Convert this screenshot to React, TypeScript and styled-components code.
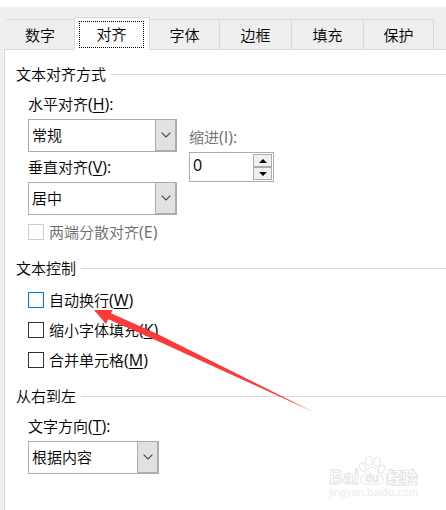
import React from 'react';
import styled, { createGlobalStyle } from 'styled-components';

const GlobalStyle = createGlobalStyle`
  *, *::before, *::after { box-sizing: border-box; }
  body {
    margin: 0;
    background: #fff;
    color: #000;
    font: 15px/20px "Open Sans", "Noto Sans CJK SC", sans-serif;
  }
`;

const Dialog = styled.main`
  position: relative;
  width: 446px;
  height: 510px;
  margin: 0;
  padding-top: 7px;
  overflow: hidden;
  white-space: nowrap;
  font-family: "Open Sans", "Noto Sans CJK SC", sans-serif;
  font-weight: 350;
`;

const Body = styled.div`
  display: flex;
  flex-direction: column;
  height: 503px;
  background: #efefef;
  padding-left: 4px;
`;

const TabBar = styled.div`
  display: flex;
  align-items: flex-end;
  height: 43px;
  padding-left: 2px;
  margin-bottom: -1px;
  z-index: 1;
`;

const Tab = styled.button<{ $width: number; $active?: boolean; $beforeActive?: boolean }>`
  display: flex;
  width: ${p => p.$width}px;
  height: ${p => (p.$active ? 33 : 31)}px;
  padding: ${p => (p.$active ? '3px 5px 2px 4px' : '0')};
  border: solid #d9d9d9;
  border-width: 1px ${p => (p.$beforeActive ? 0 : 1)}px ${p => (p.$active ? 0 : 1)}px ${p => (p.$active ? 1 : 0)}px;
  background: ${p => (p.$active ? '#fff' : '#efefef')};
  font: inherit;
  color: inherit;
`;

const TabLabel = styled.span<{ $focused?: boolean }>`
  display: flex;
  flex: 1;
  align-items: center;
  justify-content: center;
  height: ${p => (p.$focused ? 27 : 30)}px;
  padding-bottom: ${p => (p.$focused ? 1 : 0)}px;
  border: ${p => (p.$focused ? '1px dotted #000' : '0')};
`;

const Panel = styled.section`
  flex: 1;
  padding: 14px 0 0 11px;
  border: solid #d9d9d9;
  border-width: 1px 0 0 1px;
  background: #fff;
`;

const Group = styled.section<{ $height: number }>`
  height: ${p => p.$height}px;
`;

const Heading = styled.h2`
  display: flex;
  align-items: center;
  gap: 5px;
  height: 20px;
  margin: 0;
  font-size: 15px;
  font-weight: inherit;
  &::after {
    content: "";
    flex: 1;
    height: 1px;
    background: #d9d9d9;
  }
`;

const Fields = styled.div<{ $top: number }>`
  display: flex;
  gap: 12px;
  padding: ${p => p.$top}px 0 0 12px;
`;

const Column = styled.div<{ $offset?: number }>`
  padding-top: ${p => p.$offset ?? 0}px;
`;

const Label = styled.div<{ $muted?: boolean; $height: number }>`
  height: ${p => p.$height}px;
  line-height: 18px;
  color: ${p => (p.$muted ? '#6d6d6d' : '#000')};
`;

const Key = styled.span`
  text-decoration: underline;
  text-decoration-thickness: 1px;
  text-underline-offset: 2px;
`;

const Latin = styled.span`
  font-size: 16px;
  font-weight: 400;
  line-height: 1;
`;

const Combo = styled.div<{ $width: number; $gap: number }>`
  display: flex;
  align-items: center;
  justify-content: space-between;
  width: ${p => p.$width}px;
  height: 33px;
  margin-bottom: ${p => p.$gap}px;
  padding-left: 3px;
  border: 1px solid #acacb0;
`;

const ComboValue = styled.span`
  padding-bottom: 2px;
`;

const DropButton = styled.span`
  display: grid;
  place-items: center;
  width: 21px;
  height: 31px;
  border: 1px solid #acacb0;
  border-top-width: 0;
  background: #e1e1e1;
`;

const Spinner = styled.div`
  display: flex;
  justify-content: space-between;
  width: 85px;
  height: 30px;
  padding: 1px 1px 1px 3px;
  border: 1px solid #acacb0;
`;

const SpinValue = styled.span`
  font-size: 16px;
  font-weight: 400;
  line-height: 23px;
`;

const Steps = styled.span`
  display: flex;
  flex-direction: column;
`;

const Step = styled.span`
  display: grid;
  place-items: center;
  width: 19px;
  height: 13px;
  border: 1px solid #acacac;
  background: #f0f0f0;
`;

const CheckRow = styled.div<{ $gap?: number; $muted?: boolean }>`
  display: flex;
  align-items: center;
  gap: 5px;
  height: 20px;
  margin-bottom: ${p => p.$gap ?? 0}px;
  color: ${p => (p.$muted ? '#6d6d6d' : '#000')};
`;

const Box = styled.span<{ $color: string }>`
  width: 16px;
  height: 16px;
  border: 1px solid ${p => p.$color};
`;

const Pointer = styled.svg`
  position: absolute;
  left: 90px;
  top: 306px;
`;

const Watermark = styled.svg`
  position: absolute;
  left: 320px;
  top: 450px;
`;

const Access = ({ k, colon }: { k: string; colon?: boolean }) => (
  <Latin>(<Key>{k}</Key>){colon && ':'}</Latin>
);

const Select = ({ value, width, gap = 0 }: { value: string; width: number; gap?: number }) => (
  <Combo $width={width} $gap={gap}>
    <ComboValue>{value}</ComboValue>
    <DropButton>
      <svg width="10" height="6" viewBox="0 0 10 6" fill="none" stroke="#444" strokeWidth="1.1">
        <path d="M.6.6 5 5 9.4.6" />
      </svg>
    </DropButton>
  </Combo>
);

const tabs = [
  { name: '数字', width: 68, beforeActive: true },
  { name: '对齐', width: 76, active: true },
  { name: '字体', width: 70 },
  { name: '边框', width: 72 },
  { name: '填充', width: 72 },
  { name: '保护', width: 70 },
];

export default function App() {
  return (
    <>
      <GlobalStyle />
      <Dialog>
        <Body>
          <TabBar>
            {tabs.map(t => (
              <Tab key={t.name} $width={t.width} $active={t.active} $beforeActive={t.beforeActive}>
                <TabLabel $focused={t.active}>{t.name}</TabLabel>
              </Tab>
            ))}
          </TabBar>
          <Panel>
            <Group $height={194}>
              <Heading>文本对齐方式</Heading>
              <Fields $top={11}>
                <Column>
                  <Label $height={24}>水平对齐<Access k="H" colon /></Label>
                  <Select value="常规" width={149} gap={6} />
                  <Label $height={24}>垂直对齐<Access k="V" colon /></Label>
                  <Select value="居中" width={149} gap={7} />
                  <CheckRow $muted>
                    <Box $color="#cccccc" />
                    <span>两端分散对齐<Latin>(E)</Latin></span>
                  </CheckRow>
                </Column>
                <Column $offset={33}>
                  <Label $height={24} $muted>缩进<Latin>(I):</Latin></Label>
                  <Spinner>
                    <SpinValue>0</SpinValue>
                    <Steps>
                      <Step><svg width="8" height="4"><path d="M0 4 4 0 8 4Z" /></svg></Step>
                      <Step><svg width="8" height="4"><path d="M0 0 4 4 8 0Z" /></svg></Step>
                    </Steps>
                  </Spinner>
                </Column>
              </Fields>
            </Group>
            <Group $height={128}>
              <Heading>文本控制</Heading>
              <Fields $top={12}>
                <Column>
                  <CheckRow $gap={10}><Box $color="#0078d7" /><span>自动换行<Access k="W" /></span></CheckRow>
                  <CheckRow $gap={10}><Box $color="#333" /><span>缩小字体填充<Access k="K" /></span></CheckRow>
                  <CheckRow><Box $color="#333" /><span>合并单元格<Access k="M" /></span></CheckRow>
                </Column>
              </Fields>
            </Group>
            <Group $height={100}>
              <Heading>从右到左</Heading>
              <Fields $top={11}>
                <Column>
                  <Label $height={24}>文字方向<Access k="T" colon /></Label>
                  <Select value="根据内容" width={131} />
                </Column>
              </Fields>
            </Group>
          </Panel>
        </Body>
        <Pointer width="224" height="108" viewBox="90 306 224 108">
          <path fill="#fd3a3a" d="M94 310 112.7 310 111 313.2 158 334.3 312.500 411.500 156 340.3 108.3 319.2 106 324Z" />
        </Pointer>
        <Watermark width="110" height="52" viewBox="320 450 110 52" fill="#fff" stroke="#e2e2e2" fontFamily="Liberation Sans, Noto Sans CJK SC, sans-serif">
          <g strokeWidth=".9">
            <ellipse cx="362.5" cy="467" rx="3" ry="4.3" transform="rotate(-15 362.5 467)" />
            <ellipse cx="369" cy="461" rx="3.2" ry="4.6" />
            <ellipse cx="377" cy="462" rx="3.2" ry="4.6" transform="rotate(12 377 462)" />
            <ellipse cx="381.5" cy="469" rx="3" ry="4.2" transform="rotate(22 381.5 469)" />
            <path d="M371.5 467.5c-4 0-5 4-8 7-3 2-3.500 5-2 7.500 2 3.500 6 2 10 2s8 1.500 10.500-1.500c2-3 1-6-2-8.500-3-3-4.500-6.500-8.500-6.500Z" />
          </g>
          <text x="329" y="483.500" fontSize="20" fontWeight="700" strokeWidth=".9" textLength="30" lengthAdjust="spacingAndGlyphs">Bai</text>
          <text x="365" y="482" fontSize="13" fontWeight="700" strokeWidth=".4" fill="#ededed" textLength="14" lengthAdjust="spacingAndGlyphs">du</text>
          <text x="387" y="483" fontSize="15" fontWeight="500" strokeWidth="2.2" paintOrder="stroke" textLength="30" lengthAdjust="spacingAndGlyphs">经验</text>
          <text x="329" y="496" fontSize="11" fontWeight="400" stroke="none" fill="#ebebeb" textLength="89" lengthAdjust="spacingAndGlyphs">jingyan.baidu.com</text>
        </Watermark>
      </Dialog>
    </>
  );
}
